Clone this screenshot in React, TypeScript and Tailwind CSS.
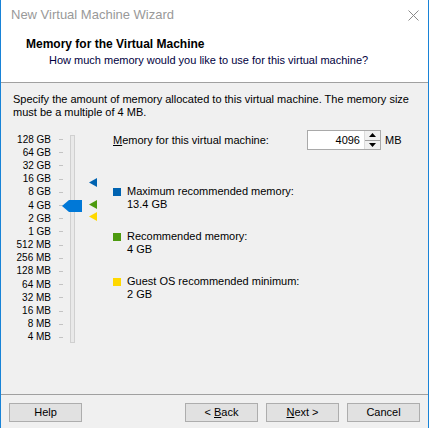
import React from "react";

const SIZES = [
  "128 GB", "64 GB", "32 GB", "16 GB", "8 GB", "4 GB", "2 GB", "1 GB",
  "512 MB", "256 MB", "128 MB", "64 MB", "32 MB", "16 MB", "8 MB", "4 MB",
];

const LEGEND = [
  { color: "bg-[#0063b1]", label: "Maximum recommended memory:", value: "13.4 GB" },
  { color: "bg-[#4c9a0f]", label: "Recommended memory:", value: "4 GB" },
  { color: "bg-[#ffd800]", label: "Guest OS recommended minimum:", value: "2 GB" },
];

function Tri({ color }: { color: string }) {
  return (
    <svg width="8" height="9" viewBox="0 0 8 9">
      <polygon points="0,4.5 8,0 8,9" fill={color} />
    </svg>
  );
}

function Btn({ children }: { children: React.ReactNode }) {
  return (
    <button className="w-[73px] h-[19px] bg-[#e1e1e1] border border-[#adadad] text-[11px] leading-none text-black">
      {children}
    </button>
  );
}

export default function App() {
  return (
    <div
      className="w-[429px] h-[428px] bg-[#f0f0f0] border-x border-[#1883d7] flex flex-col text-black overflow-hidden"
      style={{ fontFamily: '"Segoe UI", "Liberation Sans", Arial, sans-serif' }}
    >
      {/* title bar */}
      <div className="h-[30px] bg-white flex items-center justify-between pl-[10px] pr-[9px]">
        <span className="text-[13px] text-[#999999]">New Virtual Machine Wizard</span>
        <svg width="11" height="11" viewBox="0 0 11 11">
          <path d="M0.5 0.5 L10.5 10.5 M10.5 0.5 L0.5 10.5" stroke="#8a8a8a" strokeWidth="1" />
        </svg>
      </div>

      {/* header */}
      <div className="h-[53px] bg-white border-b border-[#a0a0a0] pl-[25px] pt-[6px]">
        <div className="text-[12px] font-bold leading-[16px]">Memory for the Virtual Machine</div>
        <div className="text-[11px] leading-[17px] pl-[23px] text-[#000040]">
          How much memory would you like to use for this virtual machine?
        </div>
      </div>

      {/* body */}
      <div className="flex-1 px-[12px] pt-[10px]">
        <p className="text-[11px] leading-[13px] whitespace-nowrap">
          Specify the amount of memory allocated to this virtual machine. The memory size
          <br />
          must be a multiple of 4 MB.
        </p>

        <div className="flex mt-[14px]">
          {/* slider */}
          <div className="relative flex w-[90px] shrink-0">
            <div className="flex flex-col w-[50px]">
              {SIZES.map((s) => (
                <div key={s} className="h-[13.2px] flex items-center justify-end whitespace-nowrap">
                  <span className="text-[10px] leading-none">{s}</span>
                  <span className="w-[4px] h-px bg-[#c3c3c3] ml-[8px] shrink-0" />
                </div>
              ))}
            </div>
            <div className="ml-[7px] mt-[2px] w-[5px] h-[208px] border border-[#d0d0d0] bg-[#e9e9e9]" />
            <svg className="absolute left-[49px] top-[67px]" width="20" height="12" viewBox="0 0 20 12">
              <polygon points="0,6 7,0 20,0 20,12 7,12" fill="#0078d7" />
            </svg>
            <div className="absolute left-[76px] top-[45px]"><Tri color="#0063b1" /></div>
            <div className="absolute left-[76px] top-[67px]"><Tri color="#4c9a0f" /></div>
            <div className="absolute left-[76px] top-[79px]"><Tri color="#ffd800" /></div>
          </div>

          {/* right panel */}
          <div className="flex-1 pl-[10px] -mt-[3px]">
            <div className="flex items-center h-[20px]">
              <span className="text-[11px] w-[194px] whitespace-nowrap">
                <span className="underline">M</span>emory for this virtual machine:
              </span>
              <div className="flex h-[20px] w-[74px] border border-[#a9a9a9] bg-white">
                <span className="flex-1 text-right text-[11px] pr-[4px] leading-[18px]">4096</span>
                <div className="w-[16px] flex flex-col border-l border-[#dcdcdc]">
                  <div className="flex-1 flex items-center justify-center border-b border-[#a0a0a0] bg-[#f0f0f0]">
                    <svg width="7" height="4" viewBox="0 0 7 4"><polygon points="3.5,0 7,4 0,4" fill="#000" /></svg>
                  </div>
                  <div className="flex-1 flex items-center justify-center bg-[#f0f0f0]">
                    <svg width="7" height="4" viewBox="0 0 7 4"><polygon points="0,0 7,0 3.5,4" fill="#000" /></svg>
                  </div>
                </div>
              </div>
              <span className="text-[11px] ml-[4px]">MB</span>
            </div>

            <div className="flex flex-col gap-[19px] mt-[35px]">
              {LEGEND.map((l) => (
                <div key={l.label} className="flex">
                  <span className={`w-[8px] h-[8px] mt-[3px] mr-[6px] shrink-0 ${l.color}`} />
                  <div className="text-[11px] leading-[13px] whitespace-nowrap">
                    <div>{l.label}</div>
                    <div>{l.value}</div>
                  </div>
                </div>
              ))}
            </div>
          </div>
        </div>
      </div>

      {/* footer */}
      <div className="h-[34px] border-t border-[#a0a0a0] flex items-start pt-[8px] px-[8px]">
        <Btn>Help</Btn>
        <div className="flex-1" />
        <div className="flex gap-[8px]">
          <Btn>&lt; <span className="underline">B</span>ack</Btn>
          <Btn><span className="underline">N</span>ext &gt;</Btn>
          <Btn>Cancel</Btn>
        </div>
      </div>
    </div>
  );
}
